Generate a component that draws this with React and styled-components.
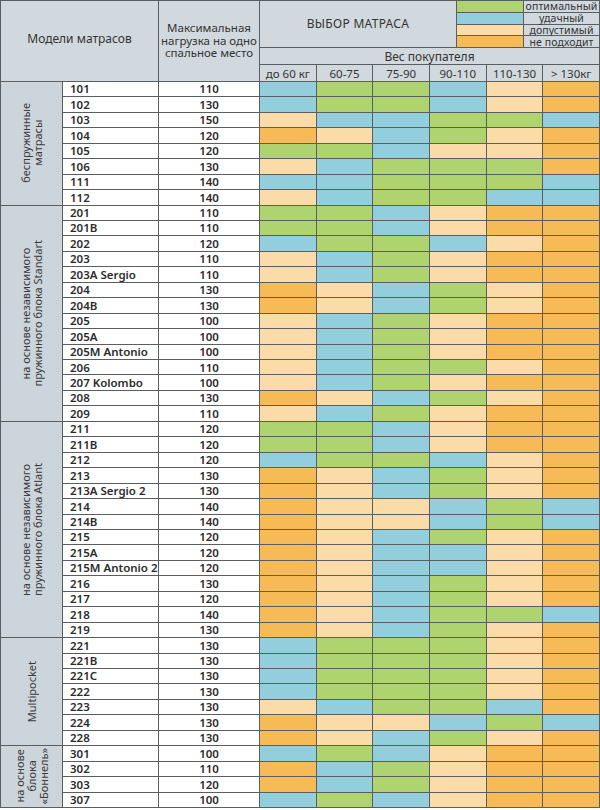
import React from 'react';
import styled, { createGlobalStyle } from 'styled-components';

const LINE = '#5a5e61';
const HEAD = '#d2d9de';
const SIDE = '#ccd5dc';
const TONES = {
    G: '#afd36f',
    B: '#93cedd',
    L: '#fbdca8',
    O: '#f6bb57'
};

const WEIGHTS = ['до 60 кг', '60-75', '75-90', '90-110', '110-130', '> 130кг'];

const LEGEND = [
    ['G', 'оптимальный'],
    ['B', 'удачный'],
    ['L', 'допустимый'],
    ['O', 'не подходит']
];

const GROUPS = [
    {
        label: 'беспружинные\nматрасы',
        rows: [
            ['101', 110, 'BGGBLO'],
            ['102', 130, 'BGGBLO'],
            ['103', 150, 'LBBGGB'],
            ['104', 120, 'OLBGLO'],
            ['105', 120, 'GGBLLO'],
            ['106', 130, 'LBGGGO'],
            ['111', 140, 'BBGGGB'],
            ['112', 140, 'LBGGBB']
        ]
    },
    {
        label: 'на основе независимого\nпружинного блока Standart',
        rows: [
            ['201', 110, 'GGBLOO'],
            ['201B', 110, 'GGBLOO'],
            ['202', 120, 'BGGBLO'],
            ['203', 110, 'LBGLOO'],
            ['203A Sergio', 110, 'LBGLOO'],
            ['204', 130, 'OLBGLO'],
            ['204B', 130, 'OLBGLO'],
            ['205', 100, 'LBGLOO'],
            ['205A', 100, 'LBGLOO'],
            ['205M Antonio', 100, 'LBGLOO'],
            ['206', 110, 'LBGGLO'],
            ['207 Kolombo', 100, 'LBGLOO'],
            ['208', 130, 'OLBGLO'],
            ['209', 110, 'LBGLOO']
        ]
    },
    {
        label: 'на основе независимого\nпружинного блока Atlant',
        rows: [
            ['211', 120, 'GGBLOO'],
            ['211B', 120, 'GGBLOO'],
            ['212', 120, 'BGGBLO'],
            ['213', 130, 'OLBGLO'],
            ['213A Sergio 2', 130, 'OLBGLO'],
            ['214', 140, 'OLLBGB'],
            ['214B', 140, 'OLLBGB'],
            ['215', 120, 'OLBGLO'],
            ['215A', 120, 'OLBBLO'],
            ['215M Antonio 2', 120, 'OLBBLO'],
            ['216', 130, 'OLBGLO'],
            ['217', 120, 'OLBGLO'],
            ['218', 140, 'OLBGGB'],
            ['219', 130, 'OLBGLO']
        ]
    },
    {
        label: 'Multipocket',
        rows: [
            ['221', 130, 'BGGGLO'],
            ['221B', 130, 'BGGGLO'],
            ['221C', 130, 'BGGGLO'],
            ['222', 130, 'BGGGLO'],
            ['223', 130, 'LBGGBO'],
            ['224', 130, 'OLLBGB'],
            ['228', 130, 'OLBGLO']
        ]
    },
    {
        label: 'на основе\nблока\n«Боннель»',
        rows: [
            ['301', 100, 'BGBLOO'],
            ['302', 110, 'OBGLOO'],
            ['303', 120, 'OBGLOO'],
            ['307', 100, 'BGBLOO']
        ]
    }
];

const GlobalStyle = createGlobalStyle`
    body {
        margin: 0;
        background: #fff;
        font-family: "Noto Sans", "Open Sans", sans-serif;
        color: #2b2b2b;
    }
`;

const Table = styled.div`
    display: grid;
    grid-template-columns: 61px 95px 100px repeat(6, 1fr);
    grid-template-rows: 46px 16px 16px repeat(47, 1fr);
    gap: 1px;
    padding: 1px;
    width: 600px;
    height: 808px;
    box-sizing: border-box;
    background: ${LINE};
`;

const HeadCell = styled.div`
    background: ${HEAD};
    display: flex;
    align-items: center;
    justify-content: center;
    text-align: center;
    font-size: ${props => props.$size || 12}px;
    line-height: 13px;
    color: #333;
    white-space: nowrap;
`;

const ModelsHead = styled(HeadCell)`
    grid-column: 1 / 3;
    grid-row: 1 / 4;
    padding-bottom: 6px;
`;

const LoadHead = styled(HeadCell)`
    grid-column: 3;
    grid-row: 1 / 4;
    font-size: 11.5px;
    line-height: 12.5px;
`;

const ChoiceHead = styled.div`
    grid-column: 4 / 10;
    grid-row: 1;
    display: flex;
    gap: 1px;
`;

const ChoiceTitle = styled(HeadCell)`
    flex: 1;
    letter-spacing: 0.3px;
    padding-bottom: 2px;
`;

const Legend = styled.div`
    width: 142px;
    display: grid;
    grid-template-columns: 66px 1fr;
    grid-template-rows: repeat(4, 1fr);
    gap: 1px;
`;

const LegendText = styled(HeadCell)`
    font-size: 10.5px;
    line-height: 10px;
    letter-spacing: 0.1px;
`;

const WeightTitle = styled(HeadCell)`
    grid-column: 4 / 10;
    grid-row: 2;
`;

const WeightCell = styled(HeadCell)`
    grid-row: 3;
    font-size: 11.5px;
`;

const GroupCell = styled.div`
    grid-column: 1;
    grid-row: span ${props => props.$span};
    background: ${SIDE};
    display: flex;
    align-items: center;
    justify-content: center;
    overflow: hidden;
`;

const GroupLabel = styled.span`
    writing-mode: vertical-rl;
    transform: rotate(180deg);
    white-space: pre-line;
    text-align: center;
    font-size: 11px;
    line-height: 12px;
    color: #3a3a3a;
`;

const DataCell = styled.div`
    background: #fff;
    display: flex;
    align-items: center;
    justify-content: ${props => (props.$center ? 'center' : 'flex-start')};
    padding-left: ${props => (props.$center ? 0 : 7)}px;
    font-size: 11.5px;
    font-weight: 600;
    line-height: 1;
    white-space: nowrap;
    overflow: hidden;
`;

const Tone = styled.div`
    background: ${props => TONES[props.$tone]};
`;

export default function App() {
    return (
        <>
            <GlobalStyle />
            <Table>
                <ModelsHead>Модели матрасов</ModelsHead>
                <LoadHead>
                    Максимальная
                    <br />
                    нагрузка на одно
                    <br />
                    спальное место
                </LoadHead>
                <ChoiceHead>
                    <ChoiceTitle>ВЫБОР МАТРАСА</ChoiceTitle>
                    <Legend>
                        {LEGEND.map(([tone, text]) => (
                            <React.Fragment key={tone}>
                                <Tone $tone={tone} />
                                <LegendText>{text}</LegendText>
                            </React.Fragment>
                        ))}
                    </Legend>
                </ChoiceHead>
                <WeightTitle>Вес покупателя</WeightTitle>
                {WEIGHTS.map(w => (
                    <WeightCell key={w}>{w}</WeightCell>
                ))}

                {GROUPS.map(group => (
                    <React.Fragment key={group.label}>
                        <GroupCell $span={group.rows.length}>
                            <GroupLabel>{group.label}</GroupLabel>
                        </GroupCell>
                        {group.rows.map(([model, load, tones]) => (
                            <React.Fragment key={model}>
                                <DataCell>{model}</DataCell>
                                <DataCell $center>{load}</DataCell>
                                {tones.split('').map((t, i) => (
                                    <Tone key={i} $tone={t} />
                                ))}
                            </React.Fragment>
                        ))}
                    </React.Fragment>
                ))}
            </Table>
        </>
    );
}
